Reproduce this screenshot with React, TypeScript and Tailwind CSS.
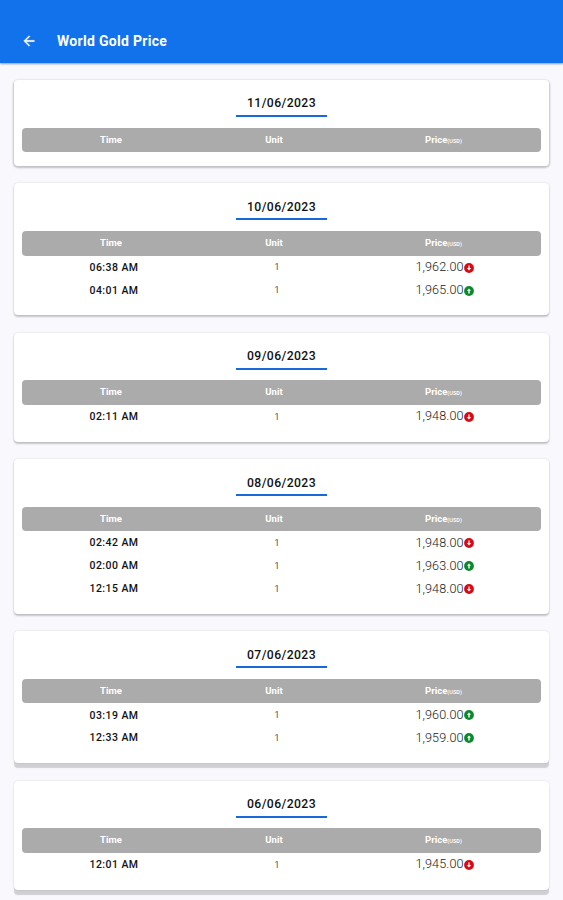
type Direction = "up" | "down";
type Row = { time: string; price: string; dir: Direction };
type Day = { date: string; shadow: string; rows: Row[] };

const light = "shadow-[0_1px_2px_1px_rgba(0,0,0,0.22)]";
const medium = "shadow-[0_2px_2px_0px_rgba(0,0,0,0.2),0_0_2px_rgba(0,0,0,0.15)]";
const heavy = "shadow-[0_5px_1px_0px_rgba(0,0,0,0.16),0_0_2px_rgba(0,0,0,0.15)]";

const days: Day[] = [
  { date: "11/06/2023", shadow: light, rows: [] },
  {
    date: "10/06/2023",
    shadow: medium,
    rows: [
      { time: "06:38 AM", price: "1,962.00", dir: "down" },
      { time: "04:01 AM", price: "1,965.00", dir: "up" },
    ],
  },
  {
    date: "09/06/2023",
    shadow: medium,
    rows: [{ time: "02:11 AM", price: "1,948.00", dir: "down" }],
  },
  {
    date: "08/06/2023",
    shadow: medium,
    rows: [
      { time: "02:42 AM", price: "1,948.00", dir: "down" },
      { time: "02:00 AM", price: "1,963.00", dir: "up" },
      { time: "12:15 AM", price: "1,948.00", dir: "down" },
    ],
  },
  {
    date: "07/06/2023",
    shadow: heavy,
    rows: [
      { time: "03:19 AM", price: "1,960.00", dir: "up" },
      { time: "12:33 AM", price: "1,959.00", dir: "up" },
    ],
  },
  {
    date: "06/06/2023",
    shadow: heavy,
    rows: [{ time: "12:01 AM", price: "1,945.00", dir: "down" }],
  },
];

function Trend({ dir }: { dir: Direction }) {
  return (
    <svg viewBox="0 0 10 10" className="size-[10px] shrink-0">
      <circle cx="5" cy="5" r="4.9" fill={dir === "down" ? "#d80a14" : "#0b8a2c"} />
      {dir === "down" ? (
        <path d="M4.4 2.5h1.2v2.4h1.6L5 7.4 2.8 4.9h1.6z" fill="#fff" />
      ) : (
        <path d="M5 2.4 7 4.8H5.7v2.6H4.3V4.8H3z" fill="#fff" />
      )}
    </svg>
  );
}

function DayCard({ day }: { day: Day }) {
  return (
    <section className={`rounded-[4px] bg-white px-2 pb-[14px] ${day.shadow}`}>
      <div className="flex h-[47.5px] justify-center">
        <h2 className="h-[37px] w-[91px] border-b-2 border-[#1968dc] pt-[13.4px] text-center text-[12.2px] leading-5 font-medium tracking-[0.4px] text-[#111]">
          {day.date}
        </h2>
      </div>
      <div className="flex h-[24.7px] items-center rounded-[4px] bg-[#ababab] text-[9.5px] font-bold text-white">
        <span className="w-[178px] text-center">Time</span>
        <span className="w-[148px] text-center">Unit</span>
        <span className="w-[191px] text-center">
          Price<span className="text-[5.6px] font-medium">(USD)</span>
        </span>
      </div>
      {day.rows.map((row) => (
        <div key={row.time} className="flex h-[22.9px] items-center pt-px text-[#111]">
          <span className="w-[184px] text-center text-[10.5px] font-medium tracking-[0.45px]">{row.time}</span>
          <span className="w-[142px] text-center text-[9.5px] text-[#555]">1</span>
          <span className="flex w-[193px] items-center justify-center text-[12.6px] font-light tracking-[0.1px] text-[#222]">
            {row.price}
            <Trend dir={row.dir} />
          </span>
        </div>
      ))}
    </section>
  );
}

export default function App() {
  return (
    <div className="flex h-[900px] flex-col overflow-hidden bg-[#f8f8fd] font-[Roboto,sans-serif]">
      <header className="flex h-[63px] shrink-0 items-center bg-[#1272ec] pt-[19px] pl-[21px] text-white shadow-[0_1px_2px_rgba(0,0,0,0.4)]">
        <svg viewBox="0 0 24 24" className="-mt-px size-[16px]" fill="currentColor" stroke="currentColor" strokeWidth="0.5">
          <path d="M20 11H7.83l5.59-5.59L12 4l-8 8 8 8 1.41-1.41L7.83 13H20z" />
        </svg>
        <h1 className="ml-[20px] text-[14px] font-bold tracking-[0.3px]">World Gold Price</h1>
      </header>
      <main className="flex flex-col gap-[17.3px] pt-[17px] pr-[14px] pl-[14px]">
        {days.map((day) => (
          <DayCard key={day.date} day={day} />
        ))}
      </main>
    </div>
  );
}
